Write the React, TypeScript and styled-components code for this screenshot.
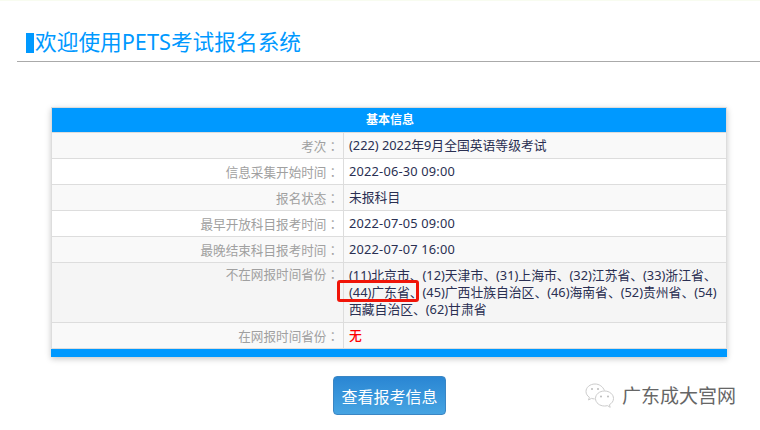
import React from 'react';
import styled, { createGlobalStyle } from 'styled-components';

const FONT = '"Noto Sans", "Noto Sans CJK SC", "Liberation Sans", sans-serif';

const rows: { label: string; value: string; tall?: boolean; alert?: boolean; date?: boolean }[] = [
  { label: '考次', value: '(222) 2022年9月全国英语等级考试' },
  { label: '信息采集开始时间', value: '2022-06-30 09:00', date: true },
  { label: '报名状态', value: '未报科目' },
  { label: '最早开放科目报考时间', value: '2022-07-05 09:00', date: true },
  { label: '最晚结束科目报考时间', value: '2022-07-07 16:00', date: true },
  {
    label: '不在网报时间省份',
    value:
      '(11)北京市、(12)天津市、(31)上海市、(32)江苏省、(33)浙江省、(44)广东省、(45)广西壮族自治区、(46)海南省、(52)贵州省、(54)西藏自治区、(62)甘肃省',
    tall: true,
  },
  { label: '在网报时间省份', value: '无', alert: true },
];

const GlobalStyle = createGlobalStyle`
  html, body {
    margin: 0;
    padding: 0;
    background: #fff;
    font-family: ${FONT};
  }
`;

const Page = styled.div`
  position: relative;
  width: 760px;
  height: 430px;
  overflow: hidden;
  border-top: 1px solid #f8fcf0;
  box-sizing: border-box;
`;

const TitleBar = styled.div`
  display: flex;
  align-items: center;
  height: 61px;
  margin-left: 17px;
  padding: 0 0 0 9px;
  border-bottom: 1px solid #aaa;
  box-sizing: border-box;
`;

const TitleMark = styled.span`
  width: 8px;
  height: 20px;
  margin-top: 23px;
  margin-right: 1px;
  background: #0099ff;
`;

const TitleText = styled.h1`
  margin: 21px 0 0;
  font-size: 21.7px;
  font-weight: 400;
  line-height: 30px;
  color: #0099ff;
`;

const InfoPanel = styled.div`
  width: 676px;
  margin: 45px 0 0 51px;
  box-shadow: 0 2px 6px rgba(0, 0, 0, 0.22);
  position: relative;
`;

const InfoTable = styled.table`
  width: 100%;
  border-collapse: collapse;
  table-layout: fixed;
  font-size: 12.8px;
`;

const LabelCol = styled.col`
  width: 292px;
`;

const HeadCell = styled.th`
  height: 25px;
  padding: 0 0 2px;
  background: #0099ff;
  border: 1px solid #ddd;
  color: #fff;
  font-size: 12px;
  font-weight: 700;
  text-align: center;
  text-indent: 2px;
  box-sizing: border-box;
`;

const Row = styled.tr<{ $odd: boolean; $tall?: boolean }>`
  height: ${(p) => (p.$tall ? 60 : 26)}px;
  background: ${(p) => (p.$tall ? '#f5f5f5' : p.$odd ? '#f9f9f9' : '#fff')};
`;

const LabelCell = styled.td<{ $tall?: boolean }>`
  padding: ${(p) => (p.$tall ? '1px' : '0')} 4px 0 0;
  border: 1px solid #ddd;
  color: #a0a0a0;
  font-size: 12.6px;
  text-align: right;
  vertical-align: ${(p) => (p.$tall ? 'top' : 'middle')};
  box-sizing: border-box;
`;

/* the colon sits centred in its square, as in the TC cut of the font */
const LabelColon = styled.span`
  font-family: "Noto Sans CJK TC", sans-serif;
`;

const ValueCell = styled.td<{ $alert?: boolean; $date?: boolean }>`
  padding: 0 5px;
  border: 1px solid #ddd;
  color: ${(p) => (p.$alert ? '#ff0000' : '#2a2f52')};
  font-weight: ${(p) => (p.$alert ? 500 : 400)};
  letter-spacing: ${(p) => (p.$date ? '0.2px' : '0')};
  line-height: 17px;
`;

const FootBar = styled.div`
  height: 8px;
  background: #0099ff;
`;

const Highlight = styled.div`
  position: absolute;
  left: 286px;
  top: 173px;
  width: 82px;
  height: 22px;
  border: 3px solid #f01408;
  border-radius: 3px;
  box-sizing: border-box;
`;

const ButtonRow = styled.div`
  display: flex;
  margin: 19px 0 0 333px;
`;

const ViewButton = styled.button`
  width: 113px;
  height: 39px;
  padding: 0;
  border: 1px solid #3a86c4;
  border-radius: 4px;
  background: linear-gradient(#2a86d3, #46a4e2);
  color: #fff;
  font-family: ${FONT};
  font-size: 16px;
`;

const Watermark = styled.div`
  position: absolute;
  left: 585px;
  top: 382px;
  display: flex;
  align-items: center;
  gap: 7px;
  color: #666;
  font-size: 19px;
  line-height: 26px;
`;

function WechatMark() {
  return (
    <svg width="30" height="26" viewBox="0 0 30 26" fill="none" stroke="#ccc" strokeWidth="1">
      <path d="M10 1C5 1 1 4.300 1 8.500c0 2.400 1.300 4.400 3.400 5.800L3.500 17l3-1.600c1 .3 2 .5 3.200.5" />
      <path d="M19.500 7.500C17.800 3.600 14.300 1 10 1" />
      <path d="M19.500 8c-5 0-9 3.300-9 7.500s4 7.500 9 7.500c1 0 2-.1 2.900-.4l2.800 1.700-.8-2.600c2.500-1.400 4.100-3.600 4.100-6.200C28.500 11.300 24.500 8 19.500 8z" />
      <circle cx="7" cy="6" r="1" fill="#bbb" stroke="none" />
      <circle cx="13" cy="6" r="1" fill="#bbb" stroke="none" />
      <circle cx="16" cy="13.500" r="1" fill="#bbb" stroke="none" />
      <circle cx="23" cy="13.500" r="1" fill="#bbb" stroke="none" />
    </svg>
  );
}

export default function App() {
  return (
    <>
      <GlobalStyle />
      <Page>
        <TitleBar>
          <TitleMark />
          <TitleText>欢迎使用PETS考试报名系统</TitleText>
        </TitleBar>

        <InfoPanel>
          <InfoTable>
            <colgroup>
              <LabelCol />
              <col />
            </colgroup>
            <thead>
              <tr>
                <HeadCell colSpan={2}>基本信息</HeadCell>
              </tr>
            </thead>
            <tbody>
              {rows.map((row, i) => (
                <Row key={row.label} $odd={i % 2 === 0} $tall={row.tall}>
                  <LabelCell $tall={row.tall}>
                    {row.label}
                    <LabelColon>：</LabelColon>
                  </LabelCell>
                  <ValueCell $alert={row.alert} $date={row.date}>
                    {row.value}
                  </ValueCell>
                </Row>
              ))}
            </tbody>
          </InfoTable>
          <FootBar />
          <Highlight />
        </InfoPanel>

        <ButtonRow>
          <ViewButton>查看报考信息</ViewButton>
        </ButtonRow>

        <Watermark>
          <WechatMark />
          <span>广东成大宫网</span>
        </Watermark>
      </Page>
    </>
  );
}
